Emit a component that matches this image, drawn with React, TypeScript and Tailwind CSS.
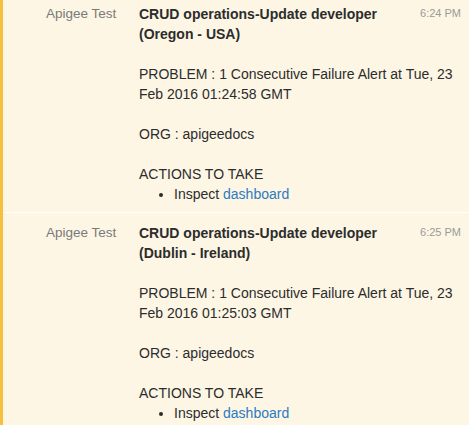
import React from "react";

type Msg = { time: string; title: string; problem: string };

const msgs: Msg[] = [
  {
    time: "6:24 PM",
    title: "CRUD operations-Update developer (Oregon - USA)",
    problem: "PROBLEM : 1 Consecutive Failure Alert at Tue, 23 Feb 2016 01:24:58 GMT",
  },
  {
    time: "6:25 PM",
    title: "CRUD operations-Update developer (Dublin - Ireland)",
    problem: "PROBLEM : 1 Consecutive Failure Alert at Tue, 23 Feb 2016 01:25:03 GMT",
  },
];

function Message({ m }: { m: Msg }) {
  return (
    <div className="flex pt-[10px] pb-[8px] border-b border-white">
      <div className="w-[115px] shrink-0 pl-[43px] text-[13.5px] leading-[20px] text-[#7a7a7a] whitespace-nowrap">
        Apigee Test
      </div>
      <div className="ml-[21px] flex-1 pr-[8px] text-[14px] leading-[20px] text-[#2c2c2c]">
        <span className="float-right ml-[10px] text-[11px] leading-[18px] text-[#9a9a9a]">
          {m.time}
        </span>
        <p className="font-bold">{m.title}</p>
        <p className="mt-[20px]">{m.problem}</p>
        <p className="mt-[20px]">ORG : apigeedocs</p>
        <p className="mt-[20px]">ACTIONS TO TAKE</p>
        <ul className="list-disc pl-[35px]">
          <li>
            Inspect <span className="text-[#2b7bc3]">dashboard</span>
          </li>
        </ul>
      </div>
    </div>
  );
}

export default function App() {
  return (
    <div
      className="h-[425px] overflow-hidden bg-[#fdf6e4] border-l-[3px] border-[#f8c13d]"
      style={{ fontFamily: '"Liberation Sans", Arial, sans-serif' }}
    >
      <div className="-mt-[6px]">
        {msgs.map((m) => (
          <Message key={m.time} m={m} />
        ))}
      </div>
    </div>
  );
}
